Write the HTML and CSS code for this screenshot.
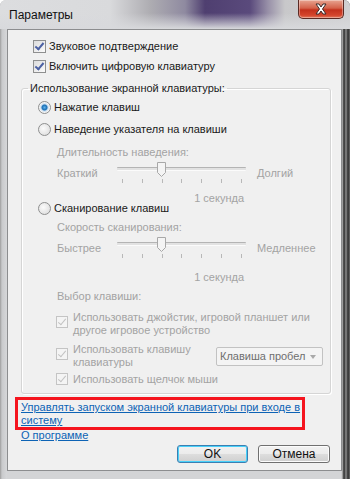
FILE: index.html
```html
<!DOCTYPE html>
<html lang="ru">
<head>
    <meta charset="UTF-8">
    <title>Параметры</title>
    <link rel="stylesheet" href="styles.css">
</head>
<body>
    <div class="window">
        <div class="titlebar">
            <span class="title">Параметры</span>
            <div class="close">
                <svg width="14" height="12" viewBox="0 0 14 12">
                    <path d="M2 1 L5 1 L7 4 L9 1 L12 1 L8.5 6 L12 11 L9 11 L7 8 L5 11 L2 11 L5.5 6 Z" fill="#fff" stroke="#3a2a2a" stroke-width="1" stroke-linejoin="round"/>
                </svg>
            </div>
        </div>
        <div class="client">
            <div class="check-row"><span class="cb on"></span>Звуковое подтверждение</div>
            <div class="check-row"><span class="cb on"></span>Включить цифровую клавиатуру</div>

            <fieldset class="group">
                <legend>Использование экранной клавиатуры:</legend>
                <div class="radio-row first"><span class="rb on"></span>Нажатие клавиш</div>
                <div class="radio-row"><span class="rb"></span>Наведение указателя на клавиши</div>
                <div class="sub-label">Длительность наведения:</div>
                <div class="slider-row">
                    <span class="side left">Краткий</span>
                    <div class="slider">
                        <div class="track"></div>
                        <svg class="thumb" width="11" height="17" viewBox="0 0 11 17">
                            <path d="M1.5 1.5 H9.5 V11.5 L5.5 15.5 L1.5 11.5 Z" fill="#f4f4f4" stroke="#a8a8a8"/>
                        </svg>
                        <div class="ticks"><i></i><i></i><i></i><i></i><i></i><i></i><i></i></div>
                    </div>
                    <span class="side">Долгий</span>
                </div>
                <div class="value">1 секунда</div>
                <div class="radio-row tight"><span class="rb"></span>Сканирование клавиш</div>
                <div class="sub-label">Скорость сканирования:</div>
                <div class="slider-row">
                    <span class="side left">Быстрее</span>
                    <div class="slider">
                        <div class="track"></div>
                        <svg class="thumb" width="11" height="17" viewBox="0 0 11 17">
                            <path d="M1.5 1.5 H9.5 V11.5 L5.5 15.5 L1.5 11.5 Z" fill="#f4f4f4" stroke="#a8a8a8"/>
                        </svg>
                        <div class="ticks"><i></i><i></i><i></i><i></i><i></i><i></i><i></i></div>
                    </div>
                    <span class="side">Медленнее</span>
                </div>
                <div class="value second">1 секунда</div>
                <div class="sub-label key">Выбор клавиши:</div>
                <div class="key-row">
                    <span class="cb off"></span>
                    <span>Использовать джойстик, игровой планшет или<br>другое игровое устройство</span>
                </div>
                <div class="key-row">
                    <span class="cb off"></span>
                    <span class="key-text">Использовать клавишу<br>клавиатуры</span>
                    <div class="combo">Клавиша пробел<span class="arrow"></span></div>
                </div>
                <div class="key-row single">
                    <span class="cb off"></span>
                    <span>Использовать щелчок мыши</span>
                </div>
            </fieldset>

            <div class="annot">
                <a href="#" class="link">Управлять запуском экранной клавиатуры при входе в<br>систему</a>
            </div>
            <a href="#" class="link about">О программе</a>

            <div class="buttons">
                <button class="btn default">OK</button>
                <button class="btn">Отмена</button>
            </div>
        </div>
    </div>
</body>
</html>
```

FILE: styles.css
```css
html, body {
    margin: 0;
    padding: 0;
}
body {
    width: 350px;
    height: 479px;
    overflow: hidden;
    font-family: 'Liberation Sans', Arial, sans-serif;
    font-size: 11px;
    color: #1a1a1a;
    white-space: nowrap;
}
.window {
    width: 350px;
    height: 479px;
    box-sizing: border-box;
    background:
        linear-gradient(to right, #9d9d9d 0, #c9cacc 2px, #d6d7d9 7px, rgba(214,215,217,0) 7px),
        linear-gradient(to right, rgba(0,0,0,0) 341px, #c4c4c4 342px, #2a2a2a 344px, #8f8f8f 346px, #2c2c2c 348px, #6e6e6e 350px),
        #d3d4d6;
    border-radius: 6px 6px 0 0;
    display: flex;
    flex-direction: column;
}
.titlebar {
    height: 29px;
    display: flex;
    justify-content: space-between;
    align-items: flex-start;
    padding: 0 6px 0 9px;
    border-radius: 6px 6px 0 0;
    background:
        linear-gradient(to bottom, rgba(216,217,220,0) 0, rgba(216,217,220,0) 45%, #d8d9dc 100%),
        linear-gradient(to right, #dcdddf 0, #d9dadc 110px, #aeadb2 150px, #8f8aa0 185px, #4f3f70 205px, #5a4a7c 250px, #9890a8 268px, #c8c8ca 285px, #d0d0d2 350px);
}
.title {
    line-height: 30px;
    font-size: 12px;
    color: #111;
}
.close {
    width: 46px;
    height: 19px;
    box-sizing: border-box;
    border: 1px solid #5a2a24;
    border-top: none;
    border-radius: 0 0 5px 5px;
    background: linear-gradient(to bottom, #e8a491 0, #d4614a 45%, #c3301c 55%, #d4452c 85%, #e07a5e 100%);
    box-shadow: inset 0 0 0 1px rgba(255,255,255,0.35);
    display: flex;
    align-items: center;
    justify-content: center;
}
.client {
    margin: 0 8px 0 7px;
    height: 442px;
    box-sizing: border-box;
    background: #f0f0f0;
    border: 1px solid #8c8d8f;
    padding-top: 6px;
}
.check-row {
    height: 20px;
    display: flex;
    align-items: center;
    padding-left: 25px;
}
.cb {
    width: 13px;
    height: 13px;
    box-sizing: border-box;
    border: 1px solid #8e8f8f;
    background: linear-gradient(135deg, #dcdcdc, #fbfbfb);
    margin-right: 3px;
    flex: none;
    position: relative;
}
.cb.on::after {
    content: '';
    position: absolute;
    left: 3px;
    top: 0px;
    width: 3px;
    height: 7px;
    border: solid #4c61a3;
    border-width: 0 2px 2px 0;
    transform: rotate(40deg);
}
.cb.off {
    width: 12px;
    height: 12px;
    border-color: #c4c4c4;
    background: #f4f4f4;
    margin-top: 5px;
    margin-right: 5px;
}
.cb.off::after {
    content: '';
    position: absolute;
    left: 3px;
    top: 0px;
    width: 3px;
    height: 7px;
    border: solid #c2c2c2;
    border-width: 0 1px 1px 0;
    transform: rotate(40deg);
}
.group {
    margin: 5px 0 0 13px;
    width: 310px;
    box-sizing: border-box;
    border: 1px solid #d5d5d5;
    border-radius: 3px;
    box-shadow: inset 1px 1px 0 #fff, 1px 1px 0 #fff;
    padding: 0 0 5px 0;
    height: 313px;
}
.group legend {
    padding: 0 2px;
    margin-left: 6px;
    line-height: 15px;
}
.radio-row {
    height: 20px;
    display: flex;
    align-items: center;
    padding-left: 16px;
    margin-top: 2px;
}
.radio-row.first {
    margin-top: 1px;
}
.radio-row.tight {
    height: 12px;
    margin-top: 0;
}
.rb {
    width: 13px;
    height: 13px;
    box-sizing: border-box;
    border: 1px solid #8e8f8f;
    border-radius: 50%;
    background: radial-gradient(circle at 40% 40%, #fbfbfb, #d8d8d8);
    margin-right: 3px;
    flex: none;
    position: relative;
}
.rb.on {
    background: radial-gradient(circle, #5fb0ea 0, #1a6fb5 2.5px, #c7dcef 3.5px, #f4f4f4 5px);
}
.sub-label {
    height: 18px;
    line-height: 18px;
    padding-left: 35px;
    margin-top: 4px;
    color: #a3a3a3;
}
.sub-label.key {
    margin-top: 6px;
}
.slider-row {
    height: 24px;
    display: flex;
    padding-left: 35px;
}
.side {
    line-height: 24px;
    color: #a3a3a3;
}
.side.left {
    width: 60px;
}
.slider {
    width: 129px;
    margin-right: 11px;
    position: relative;
}
.track {
    margin-top: 6px;
    height: 2px;
    border-top: 1px solid #b4b4b4;
    border-bottom: 1px solid #fbfbfb;
    background: #e2e2e2;
    border-radius: 1px;
}
.thumb {
    position: absolute;
    left: 39px;
    top: 0;
}
.ticks {
    display: flex;
    justify-content: space-between;
    padding: 0 4px 0 5px;
    margin-top: 8px;
}
.ticks i {
    width: 1px;
    height: 4px;
    background: #b8b8b8;
}
.value {
    width: 222px;
    height: 8px;
    line-height: 8px;
    margin-top: 9px;
    text-align: right;
    color: #a3a3a3;
}
.value.second {
    margin-top: 13px;
}
.key-row {
    display: flex;
    align-items: flex-start;
    padding-left: 34px;
    margin-top: 6px;
    line-height: 13px;
    height: 26px;
    color: #a3a3a3;
}
.key-row.single {
    height: 14px;
    margin-top: 3px;
    line-height: 14px;
}
.key-row.single .cb.off {
    margin-top: 1px;
}
.key-text {
    width: 143px;
}
.combo {
    align-self: center;
    margin-top: 1px;
    width: 107px;
    height: 19px;
    box-sizing: border-box;
    border: 1px solid #c2c2c2;
    border-radius: 2px;
    background: #f4f4f4;
    color: #6f6f6f;
    line-height: 17px;
    padding-left: 3px;
    display: flex;
    align-items: center;
    justify-content: space-between;
}
.arrow {
    width: 0;
    height: 0;
    border-left: 3.5px solid transparent;
    border-right: 3.5px solid transparent;
    border-top: 4px solid #a9a9a9;
    margin-right: 6px;
}
.annot {
    margin: 3px 0 0 7px;
    width: 290px;
    height: 33px;
    box-sizing: border-box;
    border: 3px solid #f5141e;
    padding: 1px 0 0 3px;
}
.link {
    color: #0d63b5;
    text-decoration: underline;
    line-height: 13px;
}
.about {
    display: block;
    margin-left: 13px;
    line-height: 10px;
    height: 10px;
}
.buttons {
    display: flex;
    justify-content: flex-end;
    gap: 10px;
    padding-right: 11px;
    margin-top: 5px;
}
.btn {
    width: 72px;
    height: 18px;
    box-sizing: border-box;
    border: 1px solid #707070;
    border-radius: 3px;
    background: linear-gradient(to bottom, #f2f2f2 0, #ebebeb 50%, #dddddd 51%, #cfcfcf 100%);
    box-shadow: inset 0 0 0 1px #fcfcfc;
    font-family: 'Liberation Sans', Arial, sans-serif;
    font-size: 12px;
    color: #111;
    padding: 0;
    line-height: 16px;
}
.btn.default {
    width: 71px;
    border-color: #3c7fb1;
    box-shadow: inset 0 0 0 1px #48d1fa;
}
```
